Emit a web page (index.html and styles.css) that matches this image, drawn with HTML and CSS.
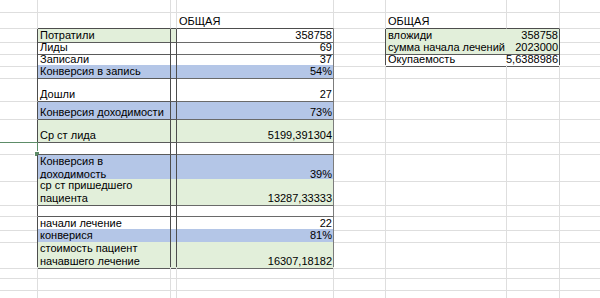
FILE: index.html
```html
<!DOCTYPE html>
<html lang="ru">
<head>
<meta charset="utf-8">
<title>Лист</title>
<link rel="stylesheet" href="styles.css">
</head>
<body>
<div class="sheet">
  <div class="row h13">
    <div class="c"></div><div class="c"></div><div class="c"></div><div class="c"></div><div class="c"></div><div class="c"></div><div class="c"></div><div class="c"></div>
  </div>
  <div class="row h16">
    <div class="c"></div><div class="c tb"></div><div class="c tb"></div><div class="c tb">ОБЩАЯ</div><div class="c"></div><div class="c tb">ОБЩАЯ</div><div class="c tb"></div><div class="c"></div>
  </div>
  <div class="row h12">
    <div class="c lb"></div><div class="c t g">Потратили</div><div class="c t g"></div><div class="c t d num">358758</div><div class="c lb"></div><div class="c t g nr">вложиди</div><div class="c t g num">358758</div><div class="c"></div>
  </div>
  <div class="row h12">
    <div class="c lb"></div><div class="c t">Лиды</div><div class="c t"></div><div class="c t d num">69</div><div class="c lb"></div><div class="c t g nr">сумма начала лечений</div><div class="c t g num">2023000</div><div class="c"></div>
  </div>
  <div class="row h12">
    <div class="c lb"></div><div class="c t">Записали</div><div class="c t"></div><div class="c t d num">37</div><div class="c lb"></div><div class="c t nr">Окупаемость</div><div class="c t num">5,6388986</div><div class="c"></div>
  </div>
  <div class="row h12">
    <div class="c lb"></div><div class="c t b">Конверсия в запись</div><div class="c t b"></div><div class="c t d b num">54%</div><div class="c"></div><div class="c"></div><div class="c"></div><div class="c"></div>
  </div>
  <div class="row h25">
    <div class="c lb"></div><div class="c t">Дошли</div><div class="c t"></div><div class="c t d num">27</div><div class="c"></div><div class="c"></div><div class="c"></div><div class="c"></div>
  </div>
  <div class="row h18">
    <div class="c lb"></div><div class="c t b">Конверсия доходимости</div><div class="c t b"></div><div class="c t d b num">73%</div><div class="c"></div><div class="c"></div><div class="c"></div><div class="c"></div>
  </div>
  <div class="row h23">
    <div class="c lb"></div><div class="c t g">Ср ст лида</div><div class="c t g"></div><div class="c t d g num">5199,391304</div><div class="c"></div><div class="c"></div><div class="c"></div><div class="c"></div>
  </div>
  <div class="row h12">
    <div class="c lb sel"><span class="handle"></span></div><div class="c t"></div><div class="c t"></div><div class="c t d"></div><div class="c"></div><div class="c"></div><div class="c"></div><div class="c"></div>
  </div>
  <div class="row h24">
    <div class="c lb"></div><div class="c t b wrap">Конверсия в<br>доходимость</div><div class="c t b"></div><div class="c t d b num">39%</div><div class="c"></div><div class="c"></div><div class="c"></div><div class="c"></div>
  </div>
  <div class="row h27">
    <div class="c lb"></div><div class="c t g wrap">ср ст пришедшего<br>пациента</div><div class="c t g"></div><div class="c t d g num">13287,33333</div><div class="c"></div><div class="c"></div><div class="c"></div><div class="c"></div>
  </div>
  <div class="row h11">
    <div class="c lb"></div><div class="c t"></div><div class="c t"></div><div class="c t d"></div><div class="c"></div><div class="c"></div><div class="c"></div><div class="c"></div>
  </div>
  <div class="row h12">
    <div class="c lb"></div><div class="c t">начали лечение</div><div class="c t"></div><div class="c t d num">22</div><div class="c"></div><div class="c"></div><div class="c"></div><div class="c"></div>
  </div>
  <div class="row h13">
    <div class="c lb"></div><div class="c t b">конверися</div><div class="c t b"></div><div class="c t d b num">81%</div><div class="c"></div><div class="c"></div><div class="c"></div><div class="c"></div>
  </div>
  <div class="row h25">
    <div class="c lb"></div><div class="c t g wrap">стоимость пациент<br>начавшего лечение</div><div class="c t g"></div><div class="c t d g num">16307,18182</div><div class="c"></div><div class="c"></div><div class="c"></div><div class="c"></div>
  </div>
  <div class="row h12">
    <div class="c"></div><div class="c"></div><div class="c"></div><div class="c"></div><div class="c"></div><div class="c"></div><div class="c"></div><div class="c"></div>
  </div>
  <div class="row h12">
    <div class="c"></div><div class="c"></div><div class="c"></div><div class="c"></div><div class="c"></div><div class="c"></div><div class="c"></div><div class="c"></div>
  </div>
  <div class="row h12">
    <div class="c"></div><div class="c"></div><div class="c"></div><div class="c"></div><div class="c"></div><div class="c"></div><div class="c"></div><div class="c"></div>
  </div>
</div>
</body>
</html>
```

FILE: styles.css
```css
html, body {
  margin: 0;
  padding: 0;
  background: #ffffff;
}

.sheet {
  width: 600px;
  height: 298px;
  overflow: hidden;
  font-family: "Liberation Sans", Arial, sans-serif;
  font-size: 11px;
  color: #000000;
}

.row {
  display: grid;
  grid-template-columns: 38px 133px 6px 157px 52px 121px 53px 41px;
}

.h11 { height: 11px; }
.h12 { height: 12px; }
.h13 { height: 13px; }
.h16 { height: 16px; }
.h18 { height: 18px; }
.h23 { height: 23px; }
.h24 { height: 24px; }
.h25 { height: 25px; }
.h27 { height: 27px; }

.c {
  box-sizing: border-box;
  border-right: 1px solid #dedede;
  border-bottom: 1px solid #dedede;
  display: flex;
  align-items: flex-end;
  justify-content: flex-start;
  padding: 0 2px 1px 2px;
  line-height: 12px;
  white-space: nowrap;
  min-width: 0;
  position: relative;
}

.t {
  border-right-color: #4d4d4d;
  border-bottom-color: #5a5a5a;
}

.d {
  border-right-color: #7c7c7c;
  border-bottom-color: #6a6a6a;
}

.tb {
  border-bottom-color: #4d4d4d;
}

.lb {
  border-right-color: #4d4d4d;
}

.nr {
  border-right: none;
}

.g {
  background: #e2efda;
}

.b {
  background: #b4c6e7;
}

.num {
  justify-content: flex-end;
  padding-right: 1px;
}

.wrap {
  line-height: 12.5px;
}

.sel {
  border-right-color: #5d8c68;
}

.sel::before {
  content: "";
  position: absolute;
  left: 0;
  right: -1px;
  top: -1px;
  height: 1px;
  background: #5d8c68;
}

.handle {
  position: absolute;
  right: -3px;
  bottom: -3px;
  width: 4px;
  height: 4px;
  background: #5d8c68;
  border: 1px solid #ffffff;
  box-sizing: content-box;
}
```
